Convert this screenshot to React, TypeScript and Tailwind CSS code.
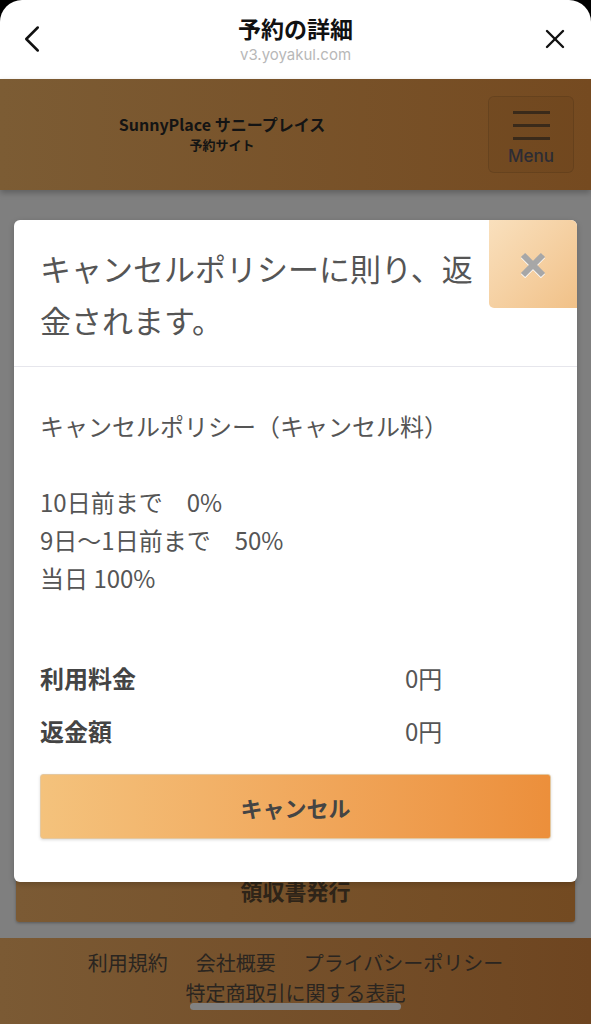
import { ChevronLeft, X } from 'lucide-react';

const jp = { fontFamily: '"Noto Sans CJK JP", "Noto Sans", sans-serif' };

export default function App() {
  return (
    <div className="relative w-[591px] h-[1024px] overflow-hidden bg-black" style={jp}>
      {/* ブラウザのシートヘッダー */}
      <div className="relative h-[79px] bg-white rounded-t-[22px] flex flex-col items-center">
        <ChevronLeft className="absolute left-[9px] top-[16px] text-[#111]" size={46} strokeWidth={1.3} />
        <X className="absolute right-[20px] top-[23px] text-[#111]" size={32} strokeWidth={1.8} />
        <div className="mt-[12px] text-[23px] leading-[32px] font-bold text-[#111]">予約の詳細</div>
        <div className="mt-[1px] text-[15px] leading-[20px] text-[#b8b8b8]" style={{ fontFamily: 'Inter, "Liberation Sans", sans-serif' }}>
          v3.yoyakul.com
        </div>
      </div>

      {/* ページ本体（オーバーレイ下の色） */}
      <div className="bg-[#7f7f7f]">
        <header className="relative z-10 h-[111px] bg-gradient-to-r from-[#7c5c34] to-[#754a20] shadow-[0_3px_6px_rgba(0,0,0,0.25)] flex items-center">
          <div className="flex-1 flex flex-col items-center pr-[44px] text-[#141414]">
            <div className="text-[16px] leading-[20px] font-bold">SunnyPlace サニープレイス</div>
            <div className="text-[13px] leading-[22px] font-bold">予約サイト</div>
          </div>
          <div className="mr-[17px] w-[86px] h-[77px] rounded-md border border-black/10 bg-black/[0.03] flex flex-col items-center pt-[14px]">
            <div className="w-[37px] h-[3px] bg-[#3a2a1a]" />
            <div className="w-[37px] h-[3px] bg-[#3a2a1a] mt-[10px]" />
            <div className="w-[37px] h-[3px] bg-[#3a2a1a] mt-[10px]" />
            <div className="mt-[6px] text-[17px] leading-[20px] font-medium text-[#2c2c34]" style={{ fontFamily: 'Inter, "Noto Sans", sans-serif' }}>
              Menu
            </div>
          </div>
        </header>

        <div className="h-[748px] flex flex-col justify-end px-[16px] pb-[16px]">
          <div className="h-[64px] rounded-[3px] bg-gradient-to-r from-[#7b5a34] to-[#734a21] shadow-[0_1px_3px_rgba(0,0,0,0.3)] flex items-center justify-center">
            <span className="text-[22px] font-bold text-[#2e2418]">領収書発行</span>
          </div>
        </div>

        <footer className="h-[86px] bg-gradient-to-r from-[#7b5a34] to-[#6e4520] flex flex-col items-center pt-[10px] text-[20px] leading-[30px] text-[#2a2520]">
          <div className="flex gap-[28px]">
            <span>利用規約</span>
            <span>会社概要</span>
            <span>プライバシーポリシー</span>
          </div>
          <div>特定商取引に関する表記</div>
        </footer>
      </div>

      {/* ホームインジケーター */}
      <div className="absolute left-[190px] top-[1003px] w-[211px] h-[7px] rounded-full bg-[#828282]" />

      {/* モーダル */}
      <div className="absolute left-[14px] top-[220px] w-[563px] h-[662px] bg-white rounded-[6px] shadow-[0_2px_6px_rgba(0,0,0,0.2)]">
        <button className="absolute right-0 top-0 w-[88px] h-[88px] rounded-tr-[6px] rounded-bl-[5px] bg-gradient-to-br from-[#f9e0bd] to-[#f1c188] flex items-center justify-center">
          <svg width="26" height="26" viewBox="0 0 26 26" className="mt-[1px]">
            <g stroke="#ffffff" strokeWidth="6" strokeLinecap="butt" transform="translate(0 1)">
              <line x1="3" y1="3" x2="23" y2="23" />
              <line x1="23" y1="3" x2="3" y2="23" />
            </g>
            <g stroke="#a7a7a7" strokeWidth="6" strokeLinecap="butt">
              <line x1="3" y1="3" x2="23" y2="23" />
              <line x1="23" y1="3" x2="3" y2="23" />
            </g>
          </svg>
        </button>

        <div className="pl-[26px] pt-[22px] pb-[20px] border-b border-[#e6e6ec] text-[31px] leading-[52px] text-[#555]">
          <div>キャンセルポリシーに則り、返</div>
          <div>金されます。</div>
        </div>

        <div className="px-[26px] pt-[40px] text-[24px] leading-[38px] text-[#555]">
          <div>キャンセルポリシー（キャンセル料）</div>
          <div className="h-[38px]" />
          <div>10日前まで　0%</div>
          <div>9日～1日前まで　50%</div>
          <div>当日 100%</div>

          <div className="mt-[54px] flex h-[53px] items-center">
            <span className="w-[365px] text-[24px] font-bold text-[#444]">利用料金</span>
            <span>0円</span>
          </div>
          <div className="flex h-[53px] items-center">
            <span className="w-[365px] text-[24px] font-bold text-[#444]">返金額</span>
            <span>0円</span>
          </div>

          <button className="mt-[17px] w-full h-[65px] rounded-[3px] border border-[#e4c8a0] bg-gradient-to-r from-[#f4c27c] to-[#ec8f3b] shadow-[0_1px_3px_rgba(0,0,0,0.15)] flex items-center justify-center">
            <span className="text-[22px] font-bold text-[#444]">キャンセル</span>
          </button>
        </div>
      </div>
    </div>
  );
}
